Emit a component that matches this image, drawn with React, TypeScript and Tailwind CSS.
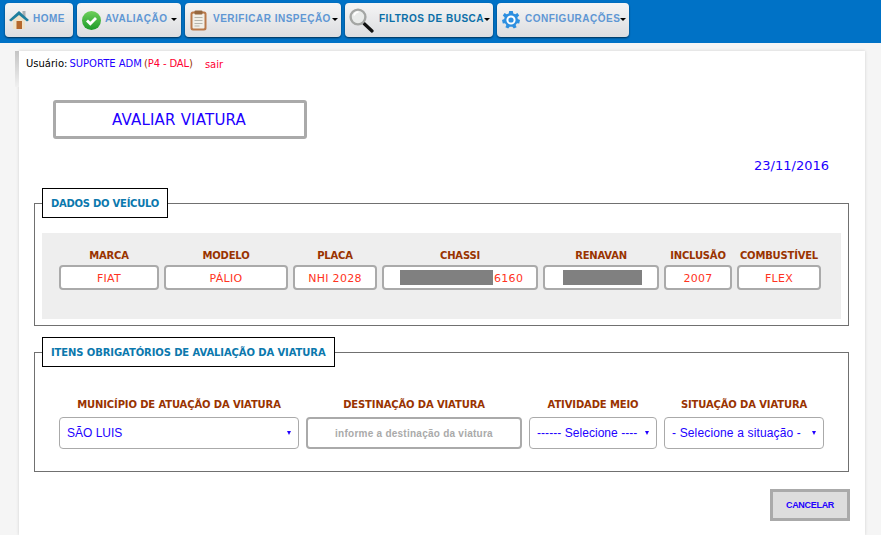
import type { ReactNode } from "react"

const verdana = "font-['DejaVu_Sans',sans-serif]"

function HomeIcon() {
  return (
    <svg width="20" height="20" viewBox="0 0 20 20" className="-ml-[1px]">
      <rect x="13.5" y="1" width="3" height="6" fill="#a9b0b4" />
      <path d="M4 9 L10 4 L16 9 V19 H4 Z" fill="#efe2c8" />
      <rect x="7.5" y="11" width="5.5" height="8" fill="#b5682c" />
      <path d="M0 10 L10 1 L20 10 L18 11.5 L10 5 L2 11.5 Z" fill="#1f7f9e" />
    </svg>
  )
}

function CheckIcon() {
  return (
    <svg width="19" height="19" viewBox="0 0 19 19">
      <defs>
        <linearGradient id="checkFill" x1="0" y1="0" x2="0" y2="1">
          <stop offset="0" stopColor="#6fd05a" />
          <stop offset="1" stopColor="#1c9a2a" />
        </linearGradient>
      </defs>
      <circle cx="9.5" cy="9.5" r="9.5" fill="url(#checkFill)" />
      <path d="M5 9.5 L8.3 12.8 L14 7" fill="none" stroke="#fff" strokeWidth="2.8" />
    </svg>
  )
}

function ClipboardIcon() {
  return (
    <svg width="17" height="21" viewBox="0 0 17 21">
      <rect x="0.5" y="1.5" width="16" height="19" rx="2.5" fill="#b9794a" />
      <rect x="2.5" y="3.5" width="12" height="15" rx="1" fill="#f1efe8" />
      <rect x="4.5" y="0.5" width="8" height="4" rx="1" fill="#96683f" />
      <path d="M4.5 7.5 H12.5 M4.5 10.5 H12.5 M4.5 13.5 H12.5 M4.5 16 H9.5" stroke="#b5b5ad" strokeWidth="1" />
    </svg>
  )
}

function SearchIcon() {
  return (
    <svg width="25" height="25" viewBox="0 0 25 25" className="-ml-[1px]">
      <path d="M15 15.5 L23 23" stroke="#111" strokeWidth="3.2" strokeLinecap="round" />
      <circle cx="9" cy="9" r="7.4" fill="#e9ebea" stroke="#a4a6a4" strokeWidth="2.4" />
      <path d="M5 7.5 A5 5 0 0 1 9.5 4" fill="none" stroke="#fff" strokeWidth="1.6" />
    </svg>
  )
}

function GearIcon() {
  return (
    <svg width="18" height="18" viewBox="0 0 18 18">
      <path
        d="M7.2 0 H10.8 L11.3 2.4 L13.3 3.3 L15.4 2 L17.2 4.6 L15.4 6.2 L15.8 8 L18 9 L17.2 12.4 L15 12.3 L13.6 14 L14.6 16.2 L11.8 17.6 L10.4 15.8 H7.6 L6.2 17.6 L3.4 16.2 L4.4 14 L3 12.3 L0.8 12.4 L0 9 L2.2 8 L2.6 6.2 L0.8 4.6 L2.6 2 L4.7 3.3 L6.7 2.4 Z"
        fill="#2d8fe0"
      />
      <circle cx="9" cy="9" r="4.6" fill="#fff" />
      <circle cx="9" cy="9" r="2.6" fill="#2d8fe0" />
    </svg>
  )
}

function NavButton({
  icon,
  label,
  width,
  iconBox = "w-[24px]",
  color = "text-[#5f97d4]",
  caretGap = "pr-[3px]",
  caret = true,
}: {
  icon: ReactNode
  label: string
  width: string
  iconBox?: string
  color?: string
  caretGap?: string
  caret?: boolean
}) {
  return (
    <div
      className={`${width} ${caretGap} h-[34px] flex items-center justify-between pl-[3px] rounded-[4px] bg-gradient-to-b from-[#f5f5f5] to-[#dcdde0] shadow-[0_1px_2px_rgba(0,0,0,0.6)]`}
    >
      <div className="flex items-center">
        <span className={`${iconBox} pl-[2px] flex`}>{icon}</span>
        <span className={`ml-[1px] mb-[4px] text-[10px] font-bold tracking-[0.5px] whitespace-nowrap ${color}`}>
          {label}
        </span>
      </div>
      {caret && <span className="mb-[1px] border-x-[3px] border-t-[3px] border-x-transparent border-t-black" />}
    </div>
  )
}

function Legend({ children, tracking }: { children: ReactNode; tracking: string }) {
  return (
    <div
      className={`absolute left-[7px] -top-[16px] h-[30px] px-[8px] flex items-center bg-white border border-black text-[10px] font-bold text-[#0b78ad] whitespace-nowrap ${tracking}`}
    >
      {children}
    </div>
  )
}

function Field({ label, width, children }: { label: string; width: string; children: ReactNode }) {
  return (
    <div className={`${width} flex flex-col items-center`}>
      <div className="h-[17px] text-[10px] leading-[16px] font-bold tracking-[-0.2px] text-[#993300] whitespace-nowrap">
        {label}
      </div>
      <div className="w-full h-[25px] flex items-center justify-center bg-white border-2 border-[#aaaaaa] rounded-[4px] text-[11px] tracking-[0.3px] text-[#ff3322] whitespace-nowrap">
        {children}
      </div>
    </div>
  )
}

function Value({ children }: { children: ReactNode }) {
  return <span className="mt-[3px]">{children}</span>
}

function Redacted({ width }: { width: string }) {
  return <span className={`${width} h-[15px] bg-[#808080]`} />
}

function SelectField({ label, value, width, tracking = "" }: { label: string; value: string; width: string; tracking?: string }) {
  return (
    <div className={`${width} flex flex-col items-center`}>
      <div className="h-[20px] text-[10px] leading-[16px] font-bold tracking-[-0.13px] text-[#993300] whitespace-nowrap">
        {label}
      </div>
      <div className="w-full h-[32px] flex items-center justify-between pl-[7px] pr-[7px] border border-[#aaaaaa] rounded-[4px] bg-white font-['Liberation_Sans',sans-serif] text-[12px] text-[#2200ff] whitespace-nowrap">
        <span className={tracking}>{value}</span>
        <span className="border-x-[2.5px] border-t-[4px] border-x-transparent border-t-[#2200ff]" />
      </div>
    </div>
  )
}

export default function App() {
  return (
    <div className={`${verdana} w-[881px] h-[535px] overflow-hidden bg-[#f5f5f5]`}>
      {/* Top menu */}
      <div className="h-[43px] bg-[#0072c6] flex gap-[4px] pl-[5px] pt-[3px] font-['Liberation_Sans',sans-serif]">
        <NavButton icon={<HomeIcon />} label="HOME" width="w-[68px]" caret={false} />
        <NavButton icon={<CheckIcon />} label="AVALIAÇÃO" width="w-[104px]" caretGap="pr-[4px]" />
        <NavButton icon={<ClipboardIcon />} label="VERIFICAR INSPEÇÃO" width="w-[156px]" />
        <NavButton icon={<SearchIcon />} label="FILTROS DE BUSCA" width="w-[148px]" iconBox="w-[30px]" color="text-[#0b6fa8]" />
        <NavButton icon={<GearIcon />} label="CONFIGURAÇÕES" width="w-[132px]" />
      </div>

      {/* Page */}
      <div className="relative ml-[19px] mt-[8px] w-[846px] h-[484px] bg-white shadow-[0_0_3px_rgba(0,0,0,0.15)] pl-[15px] pr-[16px]">
        <div className="absolute -left-[4px] top-0 w-[4px] h-[36px] bg-gradient-to-b from-[#c4c4c4] to-[#f0f0f0]" />

        <div className="h-[20px] pt-[6px] -ml-[8px] flex text-[10px] leading-[14px]">
          <span className="text-black">Usuário:</span>
          <span className="ml-[2px] text-[#2200ff]">SUPORTE ADM</span>
          <span className="ml-[2px] text-[#993300]">(</span>
          <span className="tracking-[-0.15px] text-[#ff0033]">P4 - DAL</span>
          <span className="text-[#993300]">)</span>
          <span className="ml-[12px] mt-[1px] text-[#ff0033]">sair</span>
        </div>

        <div className="ml-[19px] mt-[29px] w-[254px] h-[39px] pt-[1px] pr-[2px] flex items-center justify-center border-[3px] border-[#aaaaaa] rounded-[3px] text-[15px] tracking-[0.2px] text-[#2200ff]">
          AVALIAR VIATURA
        </div>

        <div className="mt-[19px] pr-[20px] text-right text-[13px] leading-[16px] text-[#2200ff]">23/11/2016</div>

        {/* Dados do veiculo */}
        <fieldset className="relative mt-[29px] h-[123px] border border-[#707070] pt-[29px] px-[7px]">
          <Legend tracking="tracking-[-0.25px]">DADOS DO VEÍCULO</Legend>
          <div className="h-[86px] bg-[#eeeeee] pt-[15px] pl-[17px] flex gap-[5px]">
            <Field label="MARCA" width="w-[100px]"><Value>FIAT</Value></Field>
            <Field label="MODELO" width="w-[124px]"><Value>PÁLIO</Value></Field>
            <Field label="PLACA" width="w-[84px]"><Value>NHI 2028</Value></Field>
            <Field label="CHASSI" width="w-[156px]">
              <span className="w-full flex items-center pl-[16px]">
                <Redacted width="w-[93px]" />
                <span className="ml-[1px] mt-[3px]">6160</span>
              </span>
            </Field>
            <Field label="RENAVAN" width="w-[116px]">
              <span className="ml-[2px] flex">
                <Redacted width="w-[79px]" />
              </span>
            </Field>
            <Field label="INCLUSÃO" width="w-[68px]"><Value>2007</Value></Field>
            <Field label="COMBUSTÍVEL" width="w-[84px]"><Value>FLEX</Value></Field>
          </div>
        </fieldset>

        {/* Itens obrigatorios */}
        <fieldset className="relative mt-[26px] h-[120px] border border-[#707070] pt-[44px] pl-[24px] flex gap-[7px]">
          <Legend tracking="tracking-[-0.1px]">ITENS OBRIGATÓRIOS DE AVALIAÇÃO DA VIATURA</Legend>
          <SelectField label="MUNICÍPIO DE ATUAÇÃO DA VIATURA" value="SÃO LUIS" width="w-[240px]" />
          <div className="w-[216px] flex flex-col items-center">
            <div className="h-[20px] text-[10px] leading-[16px] font-bold tracking-[-0.13px] text-[#993300] whitespace-nowrap">
              DESTINAÇÃO DA VIATURA
            </div>
            <div className="w-full h-[32px] flex items-center justify-center border-[2px] border-[#aaaaaa] rounded-[4px] font-['Liberation_Sans',sans-serif] font-bold text-[10px] tracking-[0.25px] text-[#aaaaaa] whitespace-nowrap">
              informe a destinação da viatura
            </div>
          </div>
          <SelectField label="ATIVIDADE MEIO" value="------ Selecione ----" width="w-[128px]" tracking="tracking-[0.05px]" />
          <SelectField label="SITUAÇÃO DA VIATURA" value="- Selecione a situação -" width="w-[160px]" tracking="tracking-[0.15px]" />
        </fieldset>

        <div className="mt-[17px] -mr-[1px] flex justify-end">
          <div className="w-[80px] h-[32px] pt-[2px] flex items-center justify-center bg-[#dddddd] border-[3px] border-[#aaaaaa] font-['Liberation_Sans',sans-serif] font-bold text-[9px] tracking-[-0.3px] text-[#2200ff]">
            CANCELAR
          </div>
        </div>
      </div>
    </div>
  )
}
